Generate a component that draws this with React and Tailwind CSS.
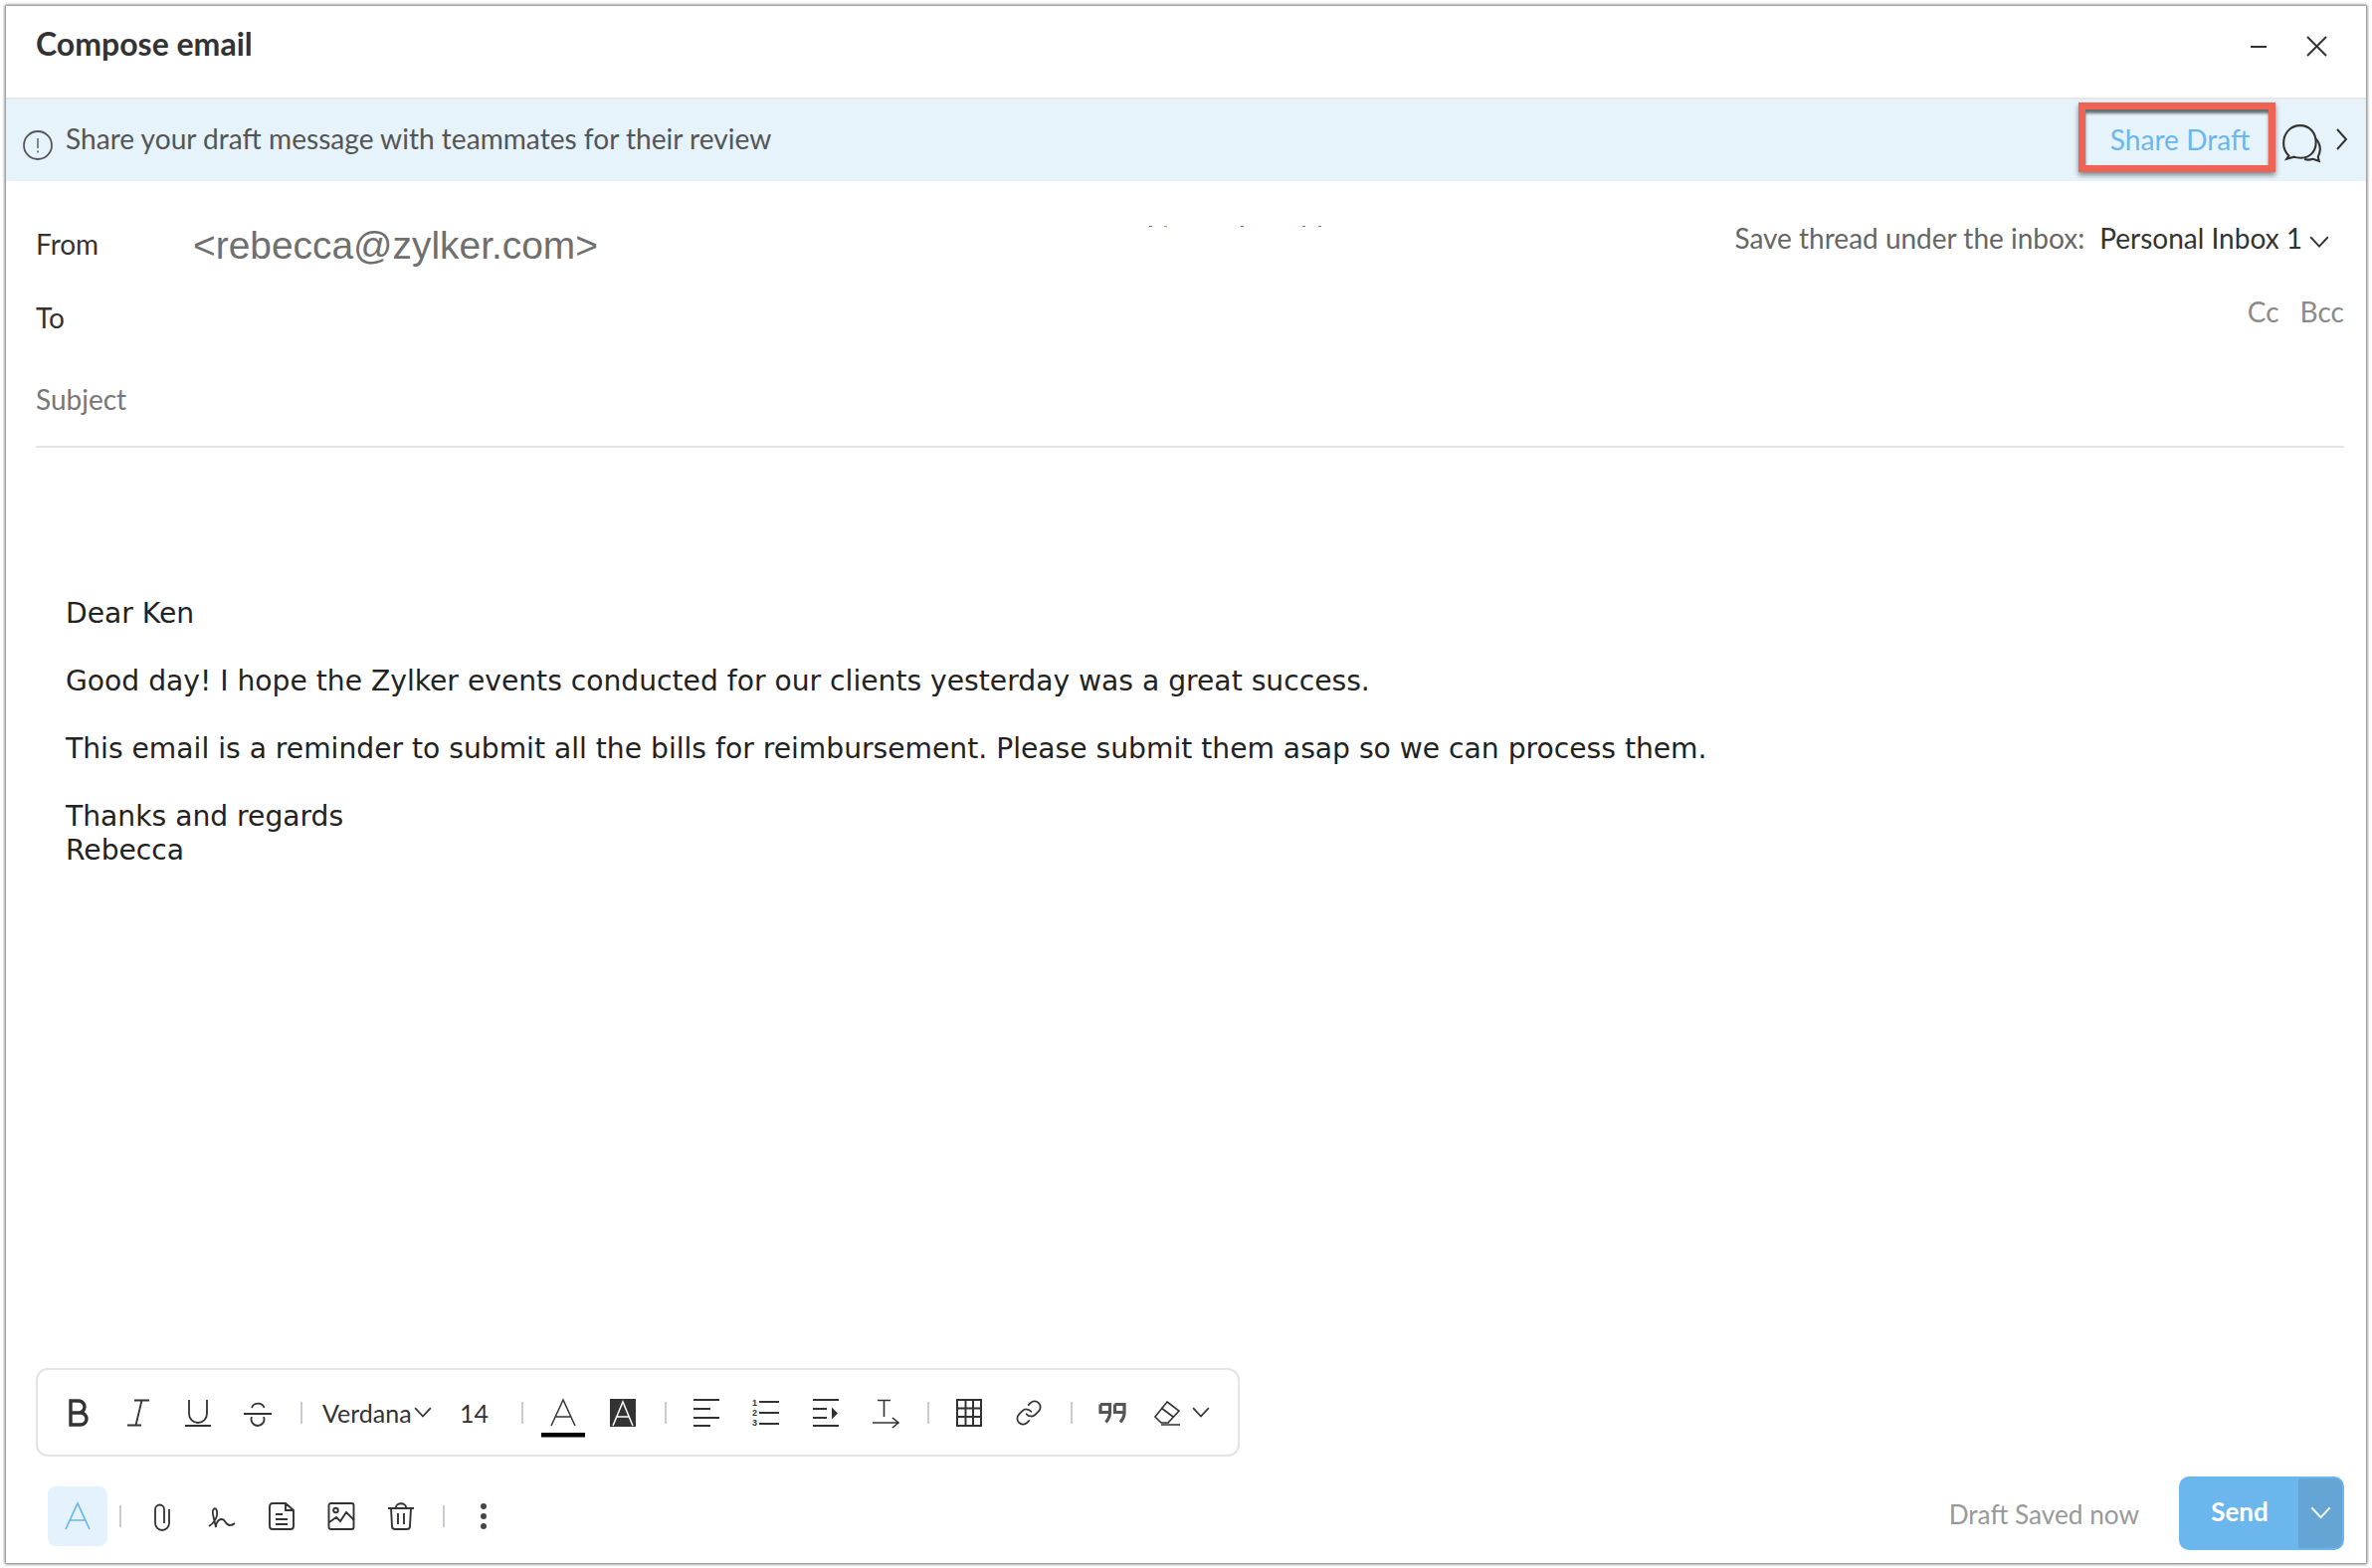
import { Link } from 'lucide-react'

const Icon = ({ w = 28, h = 28, children, sw = 1.8, color = '#333' }) => (
  <svg width={w} height={h} viewBox={`0 0 ${w} ${h}`} fill="none" stroke={color} strokeWidth={sw} className="overflow-visible">
    {children}
  </svg>
)

const Cell = ({ children }) => (
  <div className="w-[60px] h-[28px] flex items-center justify-center shrink-0">{children}</div>
)

const Sep = ({ ml, mr }) => <div className={`w-[2px] h-[22px] bg-[#c9ccd0] shrink-0 ${ml} ${mr}`} />

const Chevron = ({ color = '#333', w = 18 }) => (
  <svg width={w} height={w * 0.625} viewBox="0 0 16 10" fill="none" stroke={color} strokeWidth="1.5">
    <path d="M1 1l7 7.5L15 1" />
  </svg>
)

const FormatBar = () => (
  <div className="ml-[30px] w-[1210px] h-[89px] border-2 border-[#e3e4e6] rounded-[12px] flex items-center pl-[11px] text-[#333] text-[25px]">
    <Cell>
      <Icon sw={3.4}><path d="M6 2h8a6 6 0 0 1 0 12H6zM6 14h10a6 6 0 0 1 0 12H6z" /></Icon>
    </Cell>
    <Cell>
      <Icon><path d="M10 1.5h15M17.5 1.5l-6 25M3 26.5h14" /></Icon>
    </Cell>
    <Cell>
      <Icon><path d="M5 1v14a9 9 0 0 0 18 0V1M1 27h26" /></Icon>
    </Cell>
    <Cell>
      <Icon><path d="M8 9a6.500 6 0 0 1 12.500 0M0 15h28M8 18a6.500 6.500 0 1 0 12 0" /></Icon>
    </Cell>
    <Sep ml="ml-[13px]" />
    <span className="ml-[20px] w-[92px] shrink-0 leading-[34px]">Verdana</span>
    <Chevron />
    <span className="ml-[28px] w-[34px] shrink-0 leading-[34px]">14</span>
    <Sep ml="ml-[28px]" mr="mr-[10px]" />
    <Cell>
      <Icon sw={1.5}>
        <path d="M2 27L14 1l12 26M6.500 18h15" />
        <rect x="-8" y="34" width="44" height="4.500" fill="#000" stroke="none" />
      </Icon>
    </Cell>
    <Cell>
      <Icon>
        <rect x="1" y="0" width="26" height="28" fill="#333" stroke="none" />
        <path d="M4 27L14 3l10 24M7.500 18h13" stroke="#fff" strokeWidth="1.500" />
      </Icon>
    </Cell>
    <Sep ml="ml-[12px]" mr="mr-[10px]" />
    <Cell>
      <Icon><path d="M1 1h26M1 10h17M1 19h26M1 27h17" /></Icon>
    </Cell>
    <Cell>
      <Icon>
        <path d="M7 3h20M7 14h20M7 25h20" />
        <g fill="#333" stroke="none" fontSize="9" fontWeight="700" fontFamily="Liberation Sans, sans-serif">
          <text x="0" y="7">1</text>
          <text x="0" y="17">2</text>
          <text x="0" y="27">3</text>
        </g>
      </Icon>
    </Cell>
    <Cell>
      <Icon>
        <path d="M1 1h26M1 10h14M1 19h14M1 27h26" />
        <path d="M20 8.500l6 6-6 6z" fill="#333" stroke="none" />
      </Icon>
    </Cell>
    <Cell>
      <Icon sw={1.6}><path d="M6 1.500h13M12.500 1.500V18M1 24h26M21 19l6 5-6 5" /></Icon>
    </Cell>
    <Sep ml="ml-[12px]" mr="mr-[10px]" />
    <Cell>
      <Icon sw={2}><path d="M2 1h24v26H2zM2 9.500h24M2 18h24M10.500 1v26M18 1v26" /></Icon>
    </Cell>
    <Cell>
      <Link size={28} strokeWidth={1.500} color="#333" />
    </Cell>
    <Sep ml="ml-[12px]" mr="mr-[10px]" />
    <Cell>
      <Icon sw={3.2} color="#555">
        <path d="M2 5.500h9.500v9c0 3.500-1.500 6-4 9M2 5.500v8h9.500" />
        <path d="M16.500 5.500H26v9c0 3.500-1.500 6-4 9M16.500 5.500v8H26" />
      </Icon>
    </Cell>
    <div className="w-[50px] shrink-0 flex justify-center">
      <Icon sw={1.6}><path d="M14 3l12 9-11 12H8l-6-6zM8 9l12 9M8 26h19" /></Icon>
    </div>
    <Chevron />
  </div>
)

const BottomIcons = () => (
  <div className="flex items-center mt-[6px]">
    <div className="w-[60px] h-[60px] rounded-[8px] bg-[#e3f2fd] flex items-center justify-center ml-[42px]">
      <Icon sw={1.700} color="#6cb6ee"><path d="M2 27L14 1l12 26M6.500 18h15" /></Icon>
    </div>
    <Sep ml="ml-[12px]" mr="mr-[11px]" />
    <Cell>
      <Icon sw={1.800}><path d="M22 7v14a7 7 0 0 1-14 0V7a4.500 4.500 0 0 1 9 0v14" transform="translate(-1 0)" /></Icon>
    </Cell>
    <Cell>
      <Icon sw={1.800}><path d="M1 24c5-3 9-9 8-15-1-5-5-3-4 3 1 5 3 13 3 13s0-8 6-8c4 0 3 6 8 6 2 0 4-1 5-2" /></Icon>
    </Cell>
    <Cell>
      <Icon sw={1.900}><path d="M18 1H5a3 3 0 0 0-3 3v20a3 3 0 0 0 3 3h18a3 3 0 0 0 3-3V8zM18 1v7h8M8 12h7M8 17h12M8 22h12" /></Icon>
    </Cell>
    <Cell>
      <Icon sw={1.900}>
        <rect x="1.500" y="1" width="25" height="26" rx="2" />
        <circle cx="8.500" cy="8" r="2.300" />
        <path d="M2 20l7-5 4 4 6-9 8 8" />
      </Icon>
    </Cell>
    <Cell>
      <Icon sw={1.900}><path d="M1 6h26M9 5c0-5 10-5 10 0M4 6l1 18a3 3 0 0 0 3 3h12a3 3 0 0 0 3-3l1-18M11 11v11M17 11v11" /></Icon>
    </Cell>
    <Sep ml="ml-[12px]" />
    <svg width="8" height="28" viewBox="0 0 8 28" fill="#444" className="ml-[35px]">
      <circle cx="4" cy="4" r="3" />
      <circle cx="4" cy="14" r="3" />
      <circle cx="4" cy="24" r="3" />
    </svg>
  </div>
)

export default function App() {
  return (
    <div className="w-[2384px] h-[1576px] pt-[6px] pl-[6px] pr-[6px] bg-white font-['Lato',sans-serif]">
      <div className="h-[1565px] flex flex-col bg-white shadow-[0_0_3px_1px_#666]">
        {/* title */}
        <div className="h-[94px] shrink-0 flex items-start pl-[30px] border-b-2 border-[#e5e7e9]">
          <h1 className="mt-[19px] text-[32px] leading-[38px] font-bold text-[#333]">Compose email</h1>
          <div className="ml-auto flex items-center mt-[30px] mr-[39px] gap-[40px]">
            <div className="w-[16px] h-[2px] bg-[#333]" />
            <svg width="21" height="21" viewBox="0 0 21 21" fill="none" stroke="#333" strokeWidth="2">
              <path d="M1 1l19 19M20 1L1 20" />
            </svg>
          </div>
        </div>

        {/* share draft banner */}
        <div className="h-[82px] shrink-0 bg-[#e6f3fb] flex items-center pl-[17px] text-[28.1px] text-[#555]">
          <svg width="30" height="30" viewBox="0 0 30 30" fill="none" stroke="#555" strokeWidth="1.800" className="mt-[10px]">
            <circle cx="15" cy="15" r="14" />
            <path d="M15 8v10M15 20.500v2" strokeWidth="1.400" />
          </svg>
          <span className="ml-[13px] leading-[34px] -mt-[4px]">Share your draft message with teammates for their review</span>
          <div className="ml-auto w-[198px] h-[70px] -mt-[6px] border-[7px] border-[#ee6353] flex items-center justify-center text-[#6cb6ee] shadow-[0_3px_5px_rgba(0,0,0,0.45),inset_0_4px_3px_rgba(0,0,0,0.55)]">
            <span className="mt-[5px] ml-[6px]">Share Draft</span>
          </div>
          <svg width="42" height="42" viewBox="0 0 40 40" fill="none" stroke="#333" strokeWidth="2" className="ml-[6px] mt-[5px]">
            <path d="M7 32c-3-3-5-7-5-12C2 10 9 3 18 3s15 7 15 16-6 15-14 15c-3 0-5 0-7-1l-7 2z" />
            <path d="M33 16c3 3 4 6 4 10 0 3-1 5-2 7l1 4-6-2c-3 1-6 1-8 0" />
          </svg>
          <svg width="12" height="22" viewBox="0 0 12 22" fill="none" stroke="#333" strokeWidth="2" className="ml-[13px] mr-[18px] -mt-[3px]">
            <path d="M1 1l9 10-9 10" />
          </svg>
        </div>

        {/* from */}
        <div className="relative h-[99px] shrink-0 flex items-start pl-[30px] pr-[22px] text-[28px]">
          <span className="w-[158px] mt-[46px] leading-[34px] text-[#333]">From</span>
          <span className="mt-[44px] leading-[42px] text-[38.9px] text-[#6f6f6f] font-['Liberation_Sans',sans-serif]">&lt;rebecca@zylker.com&gt;</span>
          <div className="absolute top-[45px] left-[1149px] flex">
            <i className="w-[3px] h-[1px] bg-[#b85a50]" />
            <i className="w-[3px] h-[1px] bg-[#c98a82] ml-[12px]" />
            <i className="w-[3px] h-[1px] bg-[#b85a50] ml-[74px]" />
            <i className="w-[3px] h-[1px] bg-[#b85a50] ml-[59px]" />
            <i className="w-[3px] h-[1px] bg-[#b85a50] ml-[13px]" />
          </div>
          <div className="ml-auto mt-[40px] flex items-center leading-[34px]">
            <span className="text-[#666]">Save thread under the inbox:</span>
            <span className="ml-[15px] text-[#333]">Personal Inbox 1</span>
            <span className="ml-[7px] mr-[15px] mt-[9px]"><Chevron w={20} /></span>
          </div>
        </div>

        {/* to */}
        <div className="h-[72px] shrink-0 flex items-start pl-[30px] pr-[22px] text-[28px]">
          <span className="mt-[21px] leading-[34px] text-[#333]">To</span>
          <div className="ml-auto mt-[15px] flex gap-[21px] leading-[34px] text-[#8a8a8a]">
            <span>Cc</span>
            <span>Bcc</span>
          </div>
        </div>

        {/* subject */}
        <div className="h-[97px] shrink-0 ml-[30px] mr-[22px] border-b-2 border-[#e3e4e6] text-[28px] text-[#777]">
          <div className="mt-[31px] leading-[34px]">Subject</div>
        </div>

        {/* body */}
        <div className="pt-[150px] pl-[60px] text-[28.18px] leading-[34px] text-[#222] font-['DejaVu_Sans',sans-serif]">
          <p>Dear Ken</p>
          <p className="mt-[34px]">Good day! I hope the Zylker events conducted for our clients yesterday was a great success.</p>
          <p className="mt-[34px]">This email is a reminder to submit all the bills for reimbursement. Please submit them asap so we can process them.</p>
          <p className="mt-[34px]">Thanks and regards</p>
          <p>Rebecca</p>
        </div>

        {/* bottom toolbars */}
        <div className="mt-auto">
          <FormatBar />
          <div className="flex items-center h-[74px] mt-[20px] mb-[13px] pr-[22px]">
            <BottomIcons />
            <span className="ml-auto text-[26.2px] text-[#999] mt-[3px]">Draft Saved now</span>
            <div className="ml-[40px] w-[166px] h-[74px] rounded-[10px] bg-[#6cb6ee] p-[2px] flex">
              <span className="flex-1 text-center text-white font-bold text-[26px] leading-[66px]">Send</span>
              <div className="w-[44px] bg-[#65a5d6] rounded-r-[8px] flex items-center justify-center">
                <Chevron color="#fff" w={21} />
              </div>
            </div>
          </div>
        </div>
      </div>
    </div>
  )
}
